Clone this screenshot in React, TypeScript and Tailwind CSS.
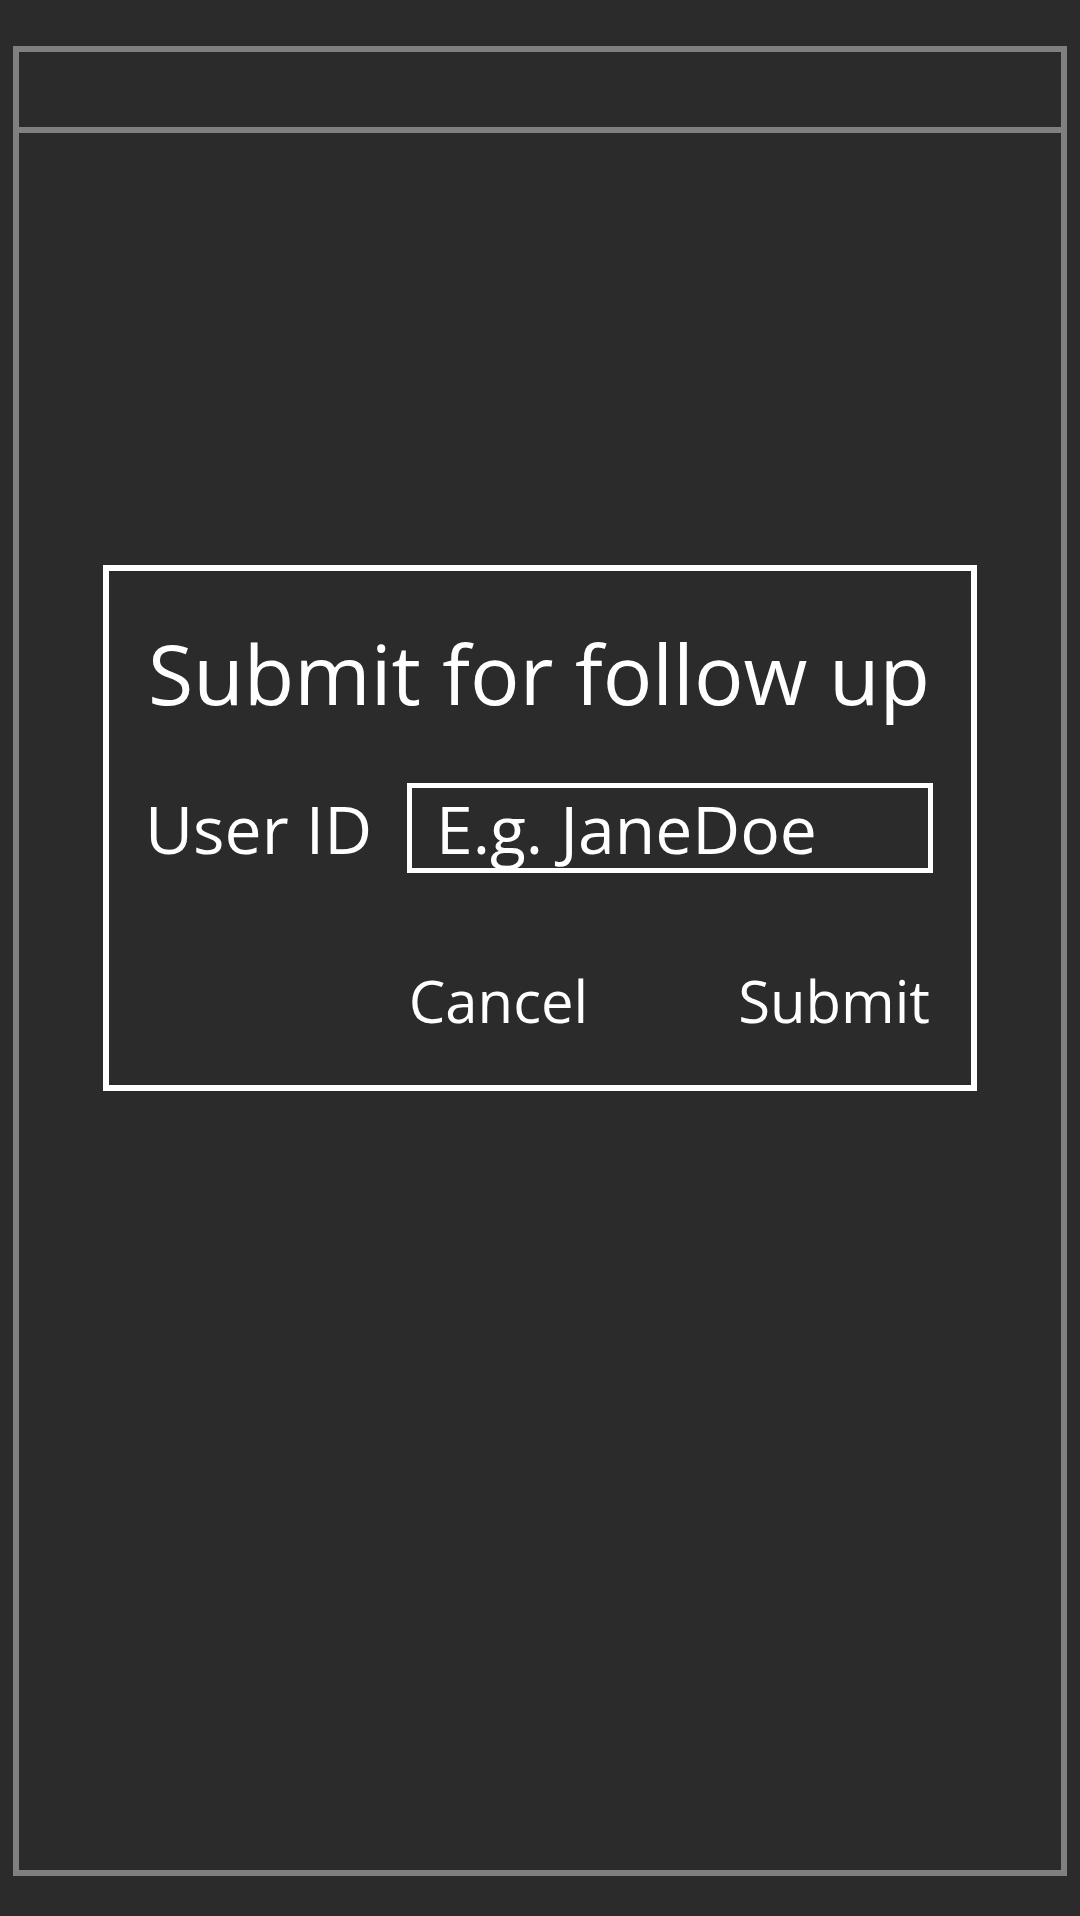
import { useState } from 'react';

export default function App() {
  const [userId, setUserId] = useState('');

  return (
    <div className="min-h-[1916px] w-[1080px] bg-[#2b2b2b] pt-[46px] pl-[13px] font-['Open_Sans',sans-serif] text-white">
      <div className="flex h-[1830px] w-[1054px] flex-col border-[6px] border-[#808080]">
        {/* Header bar */}
        <div className="h-[81px] shrink-0 border-b-[6px] border-[#808080]" />

        {/* Body */}
        <div className="flex flex-1 justify-center pt-[432px]">
          <section
            aria-labelledby="follow-up-heading"
            className="h-[526px] w-[874px] border-[6px] border-white pr-[38px] pl-[36px] pt-[61px] pb-[55px]"
          >
            <h2
              id="follow-up-heading"
              className="-mx-[20px] whitespace-nowrap text-center text-[82.5px] leading-none font-normal"
            >
              Submit for follow up
            </h2>

            <div className="mt-[68px] flex items-center justify-between">
              <label htmlFor="user-id" className="text-[66px] leading-none">
                User ID
              </label>
              <input
                id="user-id"
                value={userId}
                onChange={(e) => setUserId(e.target.value)}
                placeholder="E.g. JaneDoe"
                className="h-[90px] w-[526px] border-[5px] border-white bg-transparent pl-[24px] text-[66px] leading-none text-white outline-none placeholder:text-white"
              />
            </div>

            <div className="mt-[99px] flex justify-end gap-[150px] pr-[3px]">
              <button type="button" className="text-[58px] leading-none">
                Cancel
              </button>
              <button type="button" className="text-[58px] leading-none">
                Submit
              </button>
            </div>
          </section>
        </div>
      </div>
    </div>
  );
}
